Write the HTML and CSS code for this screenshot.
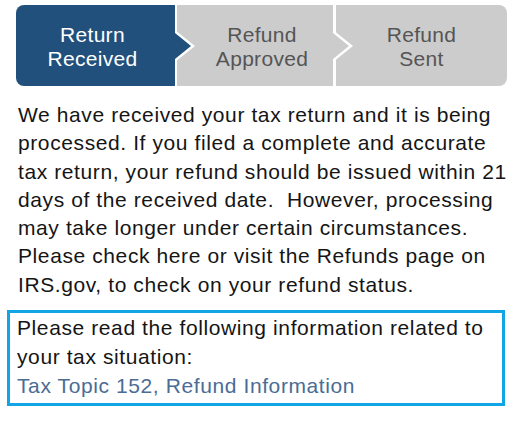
FILE: index.html
```html
<!DOCTYPE html>
<html>
<head>
<meta charset="utf-8">
<link rel="stylesheet" href="styles.css">
</head>
<body>
<div class="steps">
  <div class="step step-active step-first">Return<br>Received</div>
  <div class="step step-mid">Refund<br>Approved</div>
  <div class="step step-last">Refund<br>Sent</div>
</div>
<p class="message">We have received your tax return and it is being<br>processed. If you filed a complete and accurate<br>tax return, your refund should be issued within 21<br>days of the received date.&nbsp; However, processing<br>may take longer under certain circumstances.<br>Please check here or visit the Refunds page on<br>IRS.gov, to check on your refund status.</p>
<div class="info">
  <p class="info-text">Please read the following information related to<br>your tax situation:</p>
  <a class="info-link" href="#">Tax Topic 152, Refund Information</a>
</div>
</body>
</html>
```
FILE: styles.css
```css
html, body {
  margin: 0;
  padding: 0;
  background: #ffffff;
}
body {
  font-family: "Liberation Sans", Arial, sans-serif;
  color: #151515;
}
.steps {
  display: flex;
  gap: 2px;
  margin: 5px 15px 0 16px;
  height: 81px;
}
.step {
  position: relative;
  display: flex;
  align-items: center;
  justify-content: center;
  text-align: center;
  font-size: 21px;
  line-height: 24px;
  letter-spacing: 0.3px;
  padding-top: 3px;
  box-sizing: border-box;
  background: #cccccc;
  color: #555555;
}
.step-active {
  background: #22507d;
  color: #ffffff;
}
.step-first {
  flex: 0 0 159px;
  border-radius: 8px 0 0 8px;
  padding-right: 6px;
}
.step-mid {
  flex: 0 0 156px;
  padding-left: 14px;
  margin-right: 1px;
}
.step-last {
  flex: 1 1 auto;
  border-radius: 0 8px 8px 0;
}
.step-first::before,
.step-mid::before {
  content: "";
  position: absolute;
  z-index: 1;
  left: 100%;
  top: 50%;
  margin-top: -16px;
  border-top: 16px solid transparent;
  border-bottom: 16px solid transparent;
  border-left: 20px solid #ffffff;
}
.step-first::after,
.step-mid::after {
  content: "";
  position: absolute;
  z-index: 2;
  left: 100%;
  top: 50%;
  margin-top: -13px;
  border-top: 13px solid transparent;
  border-bottom: 13px solid transparent;
  border-left: 16px solid #cccccc;
}
.step-first::after {
  border-left-color: #22507d;
}
.message {
  margin: 15px 4px 0 18px;
  font-size: 21px;
  line-height: 28.3px;
  letter-spacing: 0.6px;
  white-space: nowrap;
}
.info {
  margin: 11px 17px 0 7px;
  border: 3px solid #12a5e6;
  padding: 0 7px 3px 7px;
  font-size: 21px;
  line-height: 29px;
  letter-spacing: 0.6px;
}
.info-text {
  margin: 0;
  white-space: nowrap;
}
.info-link {
  color: #4a6c95;
  text-decoration: none;
}
```
